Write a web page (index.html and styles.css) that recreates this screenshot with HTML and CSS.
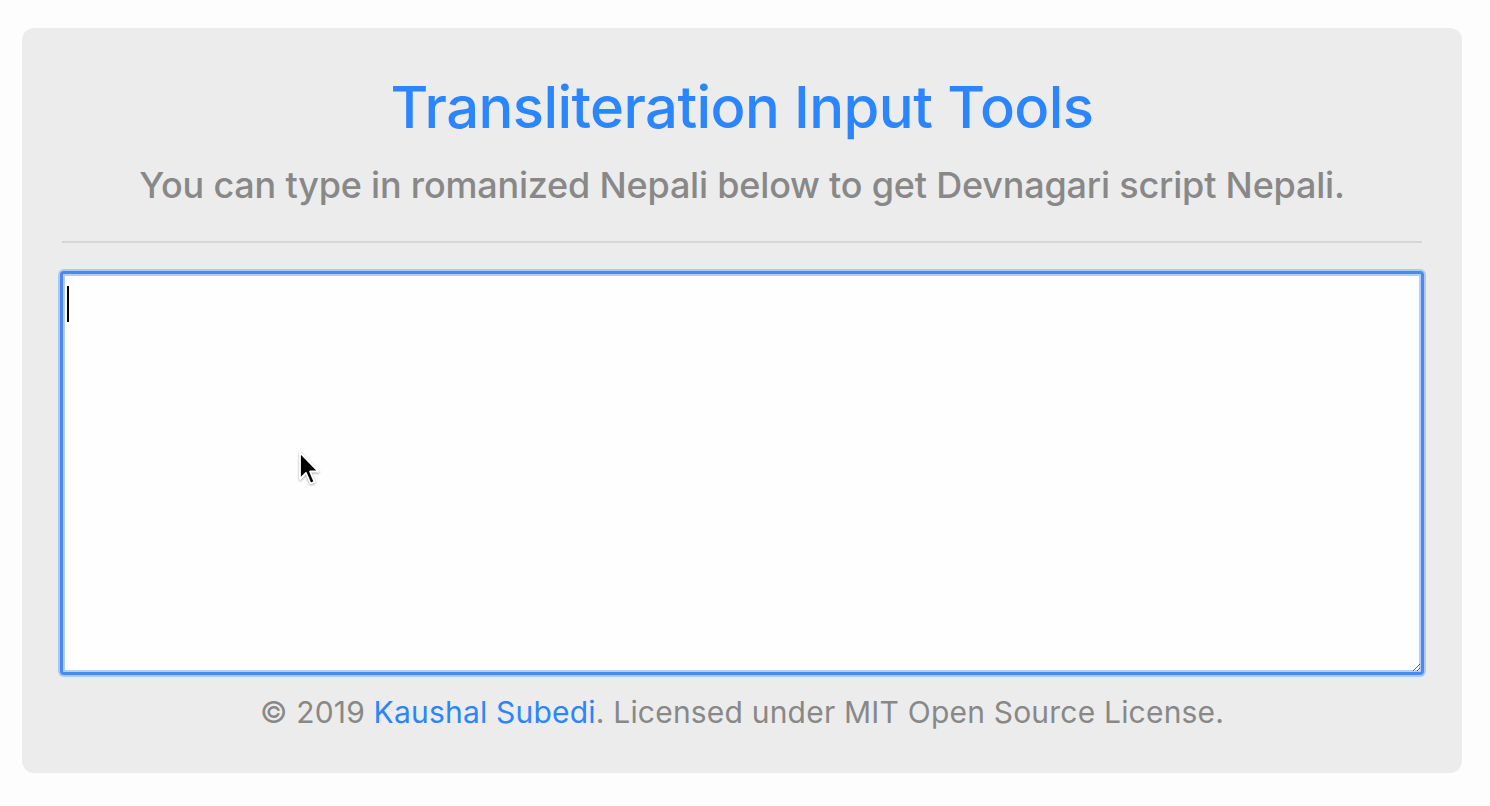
FILE: index.html
```html
<!DOCTYPE html>
<html lang="en">
<head>
<meta charset="utf-8">
<title>Transliteration Input Tools</title>
<link rel="stylesheet" href="styles.css">
</head>
<body>
<main class="panel">
  <h1 class="title">Transliteration Input Tools</h1>
  <p class="lead">You can type in romanized Nepali below to get Devnagari script Nepali.</p>
  <hr class="rule">
  <div class="editor">
    <textarea class="input" aria-label="Romanized Nepali input"></textarea>
    <span class="caret"></span>
    <svg class="pointer" width="24" height="38" viewBox="0 0 24 38" aria-hidden="true">
      <path d="M2 1.5 L2 28 L8 22 L12.5 32.5 L16.5 30.8 L12 20.5 L20.5 20.5 Z" fill="#000" stroke="#fff" stroke-width="1.8" stroke-linejoin="round"/>
    </svg>
  </div>
  <p class="footer">© 2019 <a href="#" class="link">Kaushal Subedi</a>. Licensed under MIT Open Source License.</p>
</main>
</body>
</html>
```
FILE: styles.css
```css
html, body {
  margin: 0;
  padding: 0;
  background: #fdfdfd;
}
body {
  padding: 28px 28px 0 22px;
  font-family: Inter, "Liberation Sans", sans-serif;
}
.panel {
  width: 1440px;
  box-sizing: border-box;
  background: #ececec;
  border-radius: 12px;
  padding: 42px 38px 0 38px;
  height: 745px;
  display: flex;
  flex-direction: column;
  align-items: stretch;
}
.title {
  margin: 0;
  text-align: center;
  color: #2b85fd;
  font-weight: 500;
  font-size: 58px;
  line-height: 74px;
  letter-spacing: -0.6px;
}
.lead {
  margin: 16px 0 0;
  text-align: center;
  color: #888888;
  font-size: 36px;
  line-height: 50px;
  font-weight: 500;
  letter-spacing: -0.2px;
}
.rule {
  margin: 31px 2px 0 2px;
  border: 0;
  height: 2px;
  background: #d6d6d6;
}
.editor {
  position: relative;
  margin-top: 28px;
  height: 404px;
}
.input {
  display: block;
  box-sizing: border-box;
  width: 100%;
  height: 100%;
  margin: 0;
  padding: 8px;
  background: #fefefe;
  border: 3px solid #4a89f0;
  border-radius: 4px;
  box-shadow: 0 0 0 2px #adc8f5, inset 0 0 0 2px #b3cdf7;
  outline: none;
  font-family: inherit;
  font-size: 24px;
}
.caret {
  position: absolute;
  left: 7px;
  top: 15px;
  width: 2px;
  height: 36px;
  background: #000;
}
.pointer {
  position: absolute;
  left: 238px;
  top: 180px;
  filter: drop-shadow(0 1px 1px rgba(0,0,0,0.35));
}
.footer {
  margin: 14px 0 0;
  text-align: center;
  color: #888888;
  font-size: 30px;
  line-height: 46px;
  letter-spacing: 0.2px;
}
.link {
  color: #2b85fd;
  text-decoration: none;
}
```
